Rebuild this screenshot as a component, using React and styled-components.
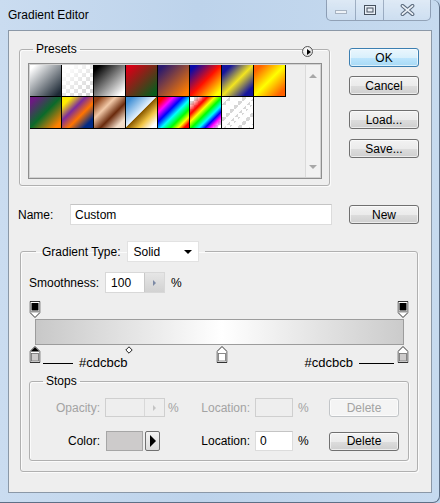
import React from 'react';
import styled, { createGlobalStyle } from 'styled-components';

// Styles
const GlobalStyle = createGlobalStyle`
html, body {
  margin:0;
  padding:0;
}
body {
  width:440px;
  height:503px;
  overflow:hidden;
  background:#bfd5ed;
  font-family:"Liberation Sans", Arial, sans-serif;
  font-size:12px;
  color:#000;
}
`;

const Window = styled.div`
box-sizing:border-box;
width:440px;
height:503px;
display:flex;
flex-direction:column;
background:linear-gradient(to right, #cadcf0 0%, #bdd3eb 45%, #c6daef 100%);
border-right:1px solid #5d6f86;
border-bottom:1px solid #5d6f86;
border-radius:0 7px 7px 0;
`;

const TitleBar = styled.div`
height:30px;
flex:none;
display:flex;
justify-content:space-between;
align-items:flex-start;
padding:0 8px 0 8px;
`;

const Title = styled.div`
line-height:30px;
font-size:12px;
color:#000;
`;

const CaptionGroup = styled.div`
display:flex;
height:20px;
border:1px solid rgba(70,90,120,0.5);
border-top:none;
border-radius:0 0 5px 5px;
background:linear-gradient(to bottom, rgba(255,255,255,0.45), rgba(255,255,255,0.15));
overflow:hidden;
`;

const CaptionButton = styled.div`
width:${p => p.$w}px;
display:flex;
align-items:center;
justify-content:center;
& + & {
  border-left:1px solid rgba(70,90,120,0.4);
}
`;

const Client = styled.div`
flex:1;
margin:0 7px 9px 8px;
border:1px solid #8b98a7;
background:#eeeeee;
display:flex;
flex-direction:column;
`;

const TopRow = styled.div`
display:flex;
align-items:flex-start;
margin-top:11px;
padding:0 12px 0 10px;
`;

const PresetsWrap = styled.div`
position:relative;
width:311px;
`;

const Group = styled.fieldset`
box-sizing:border-box;
min-width:0;
margin:0;
border:1px solid #b0b0b0;
border-radius:3px;
box-shadow:1px 1px 0 #fbfbfb, inset 1px 1px 0 #fbfbfb;
`;

const PresetsGroup = styled(Group)`
width:311px;
padding:7px 7px 6px 8px;
`;

const Legend = styled.legend`
font-size:12px;
line-height:14px;
padding:0 3px;
margin-left:5px;
`;

const MenuButton = styled.div`
position:absolute;
top:4px;
right:17px;
width:11px;
height:11px;
box-sizing:border-box;
border:1px solid #555;
border-radius:50%;
background:radial-gradient(circle at 40% 35%, #ffffff, #d4d4d4);
display:flex;
align-items:center;
justify-content:center;
&::after {
  content:'';
  margin-left:2px;
  border-left:4px solid #000;
  border-top:3px solid transparent;
  border-bottom:3px solid transparent;
}
`;

const ListBox = styled.div`
box-sizing:border-box;
height:116px;
border:1px solid #8e8e8e;
padding:1px;
box-shadow:inset 0 0 0 1px #d2d2d2;
display:flex;
background:#eeeeee;
`;

const SwatchGrid = styled.div`
flex:1;
display:grid;
grid-template-columns:repeat(8, 32px);
grid-auto-rows:32px;
align-content:start;
`;

const checker = 'repeating-conic-gradient(#d6d6d6 0 25%, #ffffff 0 50%) 0 0 / 8px 8px';

const Swatch = styled.div`
box-sizing:border-box;
border-right:1px solid #000;
border-bottom:1px solid #000;
background:${p => p.$bg};
`;

const ScrollBar = styled.div`
width:14px;
border-left:1px solid #dadada;
background:#f2f2f2;
display:flex;
flex-direction:column;
justify-content:space-between;
align-items:center;
padding:9px 0 8px;
`;

const ScrollArrow = styled.div`
width:0;
height:0;
border-left:4px solid transparent;
border-right:4px solid transparent;
${p => p.$down
  ? 'border-top:4px solid #a8a8a8;'
  : 'border-bottom:4px solid #a8a8a8;'}
`;

const ButtonColumn = styled.div`
margin-left:auto;
margin-top:6px;
display:flex;
flex-direction:column;
width:70px;
`;

const Button = styled.button`
box-sizing:border-box;
width:70px;
height:19px;
padding:0;
font-family:"Liberation Sans", Arial, sans-serif;
font-size:12px;
color:${p => (p.disabled ? '#a3a3a3' : '#000')};
border:1px solid ${p => (p.disabled ? '#c2c5c8' : p.$primary ? '#3c7fb1' : '#707070')};
border-radius:3px;
background:${p => p.disabled
  ? '#f4f4f4'
  : p.$primary
    ? 'linear-gradient(to bottom, #eaf6fd 0%, #d9f0fc 50%, #bee6fd 51%, #a7d9f5 100%)'
    : 'linear-gradient(to bottom, #f2f2f2 0%, #ebebeb 50%, #dddddd 51%, #cfcfcf 100%)'};
box-shadow:inset 0 0 0 1px rgba(255,255,255,0.6);
margin-top:${p => p.$gap || 0}px;
margin-left:${p => (p.$push ? 'auto' : '0')};
`;

const NameRow = styled.div`
display:flex;
align-items:center;
margin-top:18px;
padding:0 12px 0 9px;
`;

const Label = styled.span`
width:${p => (p.$w ? `${p.$w}px` : 'auto')};
flex:none;
color:${p => (p.$disabled ? '#a3a3a3' : '#000')};
white-space:nowrap;
`;

const TextBox = styled.div`
box-sizing:border-box;
width:${p => p.$w}px;
height:${p => p.$h || 21}px;
display:flex;
align-items:center;
padding-left:${p => p.$pad || 4}px;
background:${p => (p.$disabled ? '#eeeeee' : '#ffffff')};
border:1px solid ${p => (p.$disabled ? '#cfcfcf' : '#dcdcdc')};
border-top-color:${p => (p.$disabled ? '#cfcfcf' : '#c4c4c4')};
`;

const TypeGroup = styled(Group)`
margin:16px 13px 0 11px;
padding:10px 8px 10px 8px;
`;

const TypeLegend = styled.legend`
padding:0 6px;
margin-left:7px;
`;

const LegendInner = styled.div`
display:flex;
align-items:center;
gap:6px;
`;

const Select = styled.div`
box-sizing:border-box;
width:72px;
height:21px;
display:flex;
align-items:center;
justify-content:space-between;
padding:0 6px;
background:#fff;
border:1px solid #e2e2e2;
&::after {
  content:'';
  border-top:4px solid #000;
  border-left:4px solid transparent;
  border-right:4px solid transparent;
}
`;

const Row = styled.div`
display:flex;
align-items:center;
`;

const SpinBox = styled.div`
box-sizing:border-box;
width:60px;
height:${p => p.$h || 21}px;
margin-left:${p => p.$ml || 0}px;
display:flex;
border:1px solid ${p => (p.$disabled ? '#cfcfcf' : '#d8d8d8')};
background:${p => (p.$disabled ? '#eeeeee' : '#ffffff')};
`;

const SpinValue = styled.div`
flex:1;
display:flex;
align-items:center;
padding-left:5px;
`;

const SpinButton = styled.div`
width:19px;
display:flex;
align-items:center;
justify-content:center;
border-left:1px solid ${p => (p.$disabled ? '#d8d8d8' : '#c8c8c8')};
background:${p => (p.$disabled ? '#eeeeee' : 'linear-gradient(to bottom, #e6e6e6, #d2d2d2)')};
&::after {
  content:'';
  border-left:3px solid ${p => (p.$disabled ? '#c4c4c4' : '#7d8aa5')};
  border-top:3px solid transparent;
  border-bottom:3px solid transparent;
}
`;

const Percent = styled.span`
margin-left:${p => p.$ml || 0}px;
color:${p => (p.$disabled ? '#a3a3a3' : '#000')};
`;

const Strip = styled.div`
width:369px;
margin:8px 0 0 6px;
`;

const MarkerTrack = styled.div`
position:relative;
height:${p => p.$h}px;
`;

const Marker = styled.div`
position:absolute;
top:${p => p.$top || 0}px;
left:${p => p.$at}%;
transform:translateX(-50%);
line-height:0;
`;

const Bar = styled.div`
box-sizing:border-box;
height:26px;
border:1px solid #9c9c9c;
background:linear-gradient(to right, #c8c8c8 0%, #ffffff 50.7%, #cbcbcb 100%);
`;

const Annotations = styled.div`
position:relative;
box-sizing:border-box;
height:25px;
padding:11px 10px 0 8px;
display:flex;
justify-content:space-between;
align-items:center;
font-size:13px;
line-height:14px;
`;

const Note = styled.div`
display:flex;
align-items:center;
gap:6px;
`;

const Leader = styled.div`
width:${p => p.$w}px;
height:1px;
background:#000;
`;

const StopsGroup = styled(Group)`
margin:4px 0 0 0;
padding:10px 8px 9px 8px;
`;

const StopsGrid = styled.div`
display:grid;
grid-template-columns:67px 59px 36px 55px 38px 36px 70px;
row-gap:14px;
align-items:center;
`;

const CellLabel = styled.span`
text-align:right;
padding-right:5px;
color:${p => (p.$disabled ? '#a3a3a3' : '#000')};
`;

const CellPercent = styled.span`
padding-left:${p => p.$pl}px;
color:${p => (p.$disabled ? '#a3a3a3' : '#000')};
`;

const ColorControl = styled.div`
display:flex;
align-items:center;
gap:2px;
padding-left:1px;
`;

const ColorWell = styled.div`
box-sizing:border-box;
width:37px;
height:20px;
background:#cdcbcb;
border:1px solid #a6a6a6;
`;

const ArrowButton = styled.div`
box-sizing:border-box;
width:15px;
height:20px;
border:1px solid #707070;
border-radius:2px;
background:linear-gradient(to bottom, #f4f4f4, #dcdcdc);
display:flex;
align-items:center;
justify-content:center;
&::after {
  content:'';
  margin-left:1px;
  border-left:6px solid #000;
  border-top:6px solid transparent;
  border-bottom:6px solid transparent;
}
`;

// Drawings
const CloseGlyph = () => (
  <svg width="15" height="12" viewBox="0 0 15 12">
    <path d="M2.5 1.8 L12.5 10.2 M12.5 1.8 L2.5 10.2" stroke="#5f6e80" strokeWidth="3.8" strokeLinecap="round" />
    <path d="M2.5 1.8 L12.5 10.2 M12.5 1.8 L2.5 10.2" stroke="#eef3f9" strokeWidth="1.7" strokeLinecap="round" />
  </svg>
);

const MaxGlyph = () => (
  <svg width="12" height="10" viewBox="0 0 12 10">
    <rect x="0.5" y="0.5" width="11" height="9" fill="#e9eff6" stroke="#46515e" />
    <rect x="3" y="3" width="6" height="4" fill="none" stroke="#46515e" />
  </svg>
);

const MinGlyph = () => (
  <svg width="12" height="10" viewBox="0 0 12 10">
    <rect x="0.5" y="5.5" width="11" height="3" fill="#eef2f7" stroke="#a7b3c2" />
  </svg>
);

const OpacityStop = () => (
  <svg width="11" height="17" viewBox="0 0 11 17">
    <path d="M0.5 0.5 H10.5 V11.5 L5.5 16.5 L0.5 11.5 Z" fill="#ffffff" stroke="#333" />
    <rect x="2" y="2" width="7" height="7.5" fill="#000" />
    <rect x="1" y="10" width="9" height="1.5" fill="#9a9a9a" />
  </svg>
);

const ColorStop = ({ fill, selected }) => (
  <svg width="11" height="17" viewBox="0 0 11 17">
    <path d="M5.5 0.5 L10.5 5.5 V16.5 H0.5 V5.5 Z" fill="#ffffff" stroke="#333" />
    {selected && <path d="M5.5 1.2 L9.8 5.5 H1.2 Z" fill="#000" />}
    <rect x="2" y="7.5" width="7" height="7.5" fill={fill} stroke="#6e6e6e" strokeWidth="0.8" />
  </svg>
);

const Midpoint = () => (
  <svg width="8" height="8" viewBox="0 0 8 8">
    <path d="M4 0.8 L7.2 4 L4 7.2 L0.8 4 Z" fill="#fff" stroke="#222" />
  </svg>
);

const presets = [
  'linear-gradient(135deg, #ffffff 8%, #1e2a36 92%)',
  `linear-gradient(135deg, #ffffff 10%, rgba(255,255,255,0) 90%), ${checker}`,
  'linear-gradient(135deg, #000000 10%, #ffffff 90%)',
  'linear-gradient(135deg, #d60016 10%, #0b5b1c 90%)',
  'linear-gradient(135deg, #2b1a6e 10%, #ff7c00 90%)',
  'linear-gradient(135deg, #0a0aa8 10%, #ff1000 50%, #ffff00 90%)',
  'linear-gradient(135deg, #15159e 15%, #f2e420 50%, #15159e 85%)',
  'linear-gradient(135deg, #ff6200 12%, #ffff00 50%, #ff6200 88%)',
  'linear-gradient(135deg, #6c1a82 10%, #0b6a2a 50%, #ff8000 90%)',
  'linear-gradient(135deg, #ffec00 15%, #7c2c9c 38%, #ff7400 60%, #002a86 85%)',
  'linear-gradient(135deg, #8b3c12 10%, #f2c9a8 35%, #6a2a0c 60%, #f2dcc8 85%)',
  'linear-gradient(135deg, #3e8ed4 10%, #e4f2ff 48%, #8a5a00 50%, #f2c444 70%, #ffffff 90%)',
  'linear-gradient(135deg, #ff0000 10%, #ff00ff 25%, #0000ff 40%, #00ffff 55%, #00ff00 70%, #ffff00 82%, #ff0000 92%)',
  `linear-gradient(135deg, rgba(255,0,0,0) 10%, #ff0000 28%, #ffff00 40%, #00ff00 52%, #00ffff 64%, #0000ff 74%, #ff00ff 82%, rgba(255,0,255,0) 95%), ${checker}`,
  `repeating-linear-gradient(135deg, rgba(255,255,255,0.95) 0 5px, rgba(255,255,255,0) 5px 9px), ${checker}`,
];

export default function App() {
  return (
    <>
      <GlobalStyle />
      <Window>
        <TitleBar>
          <Title>Gradient Editor</Title>
          <CaptionGroup>
            <CaptionButton $w={28}><MinGlyph /></CaptionButton>
            <CaptionButton $w={27}><MaxGlyph /></CaptionButton>
            <CaptionButton $w={46}><CloseGlyph /></CaptionButton>
          </CaptionGroup>
        </TitleBar>

        <Client>
          <TopRow>
            <PresetsWrap>
              <PresetsGroup>
                <Legend>Presets</Legend>
                <ListBox>
                  <SwatchGrid>
                    {presets.map((bg, i) => <Swatch key={i} $bg={bg} />)}
                  </SwatchGrid>
                  <ScrollBar>
                    <ScrollArrow />
                    <ScrollArrow $down />
                  </ScrollBar>
                </ListBox>
              </PresetsGroup>
              <MenuButton />
            </PresetsWrap>
            <ButtonColumn>
              <Button $primary>OK</Button>
              <Button $gap={9}>Cancel</Button>
              <Button $gap={15}>Load...</Button>
              <Button $gap={10}>Save...</Button>
            </ButtonColumn>
          </TopRow>

          <NameRow>
            <Label $w={52}>Name:</Label>
            <TextBox $w={262}>Custom</TextBox>
            <Button $push>New</Button>
          </NameRow>

          <TypeGroup>
            <TypeLegend>
              <LegendInner>
                <Label>Gradient Type:</Label>
                <Select>Solid</Select>
              </LegendInner>
            </TypeLegend>

            <Row>
              <Label>Smoothness:</Label>
              <SpinBox $ml={6}>
                <SpinValue>100</SpinValue>
                <SpinButton />
              </SpinBox>
              <Percent $ml={6}>%</Percent>
            </Row>

            <Strip>
              <MarkerTrack $h={18}>
                <Marker $at={0}><OpacityStop /></Marker>
                <Marker $at={99.6}><OpacityStop /></Marker>
              </MarkerTrack>
              <Bar />
              <Annotations>
                <Marker $at={0} $top={1}><ColorStop fill="#cdcbcb" selected /></Marker>
                <Marker $at={25.5} $top={1}><Midpoint /></Marker>
                <Marker $at={50.7} $top={1}><ColorStop fill="#ffffff" /></Marker>
                <Marker $at={99.6} $top={1}><ColorStop fill="#cdcbcb" /></Marker>
                <Note>
                  <Leader $w={30} />
                  <span>#cdcbcb</span>
                </Note>
                <Note>
                  <span>#cdcbcb</span>
                  <Leader $w={35} />
                </Note>
              </Annotations>
            </Strip>

            <StopsGroup>
              <Legend>Stops</Legend>
              <StopsGrid>
                <CellLabel $disabled>Opacity:</CellLabel>
                <SpinBox $h={19} $disabled>
                  <SpinValue />
                  <SpinButton $disabled />
                </SpinBox>
                <CellPercent $pl={4} $disabled>%</CellPercent>
                <CellLabel $disabled>Location:</CellLabel>
                <TextBox $w={38} $h={19} $disabled />
                <CellPercent $pl={5} $disabled>%</CellPercent>
                <Button disabled>Delete</Button>

                <CellLabel>Color:</CellLabel>
                <ColorControl>
                  <ColorWell />
                  <ArrowButton />
                </ColorControl>
                <span />
                <CellLabel>Location:</CellLabel>
                <TextBox $w={38} $h={20}>0</TextBox>
                <CellPercent $pl={5}>%</CellPercent>
                <Button>Delete</Button>
              </StopsGrid>
            </StopsGroup>
          </TypeGroup>
        </Client>
      </Window>
    </>
  );
}
